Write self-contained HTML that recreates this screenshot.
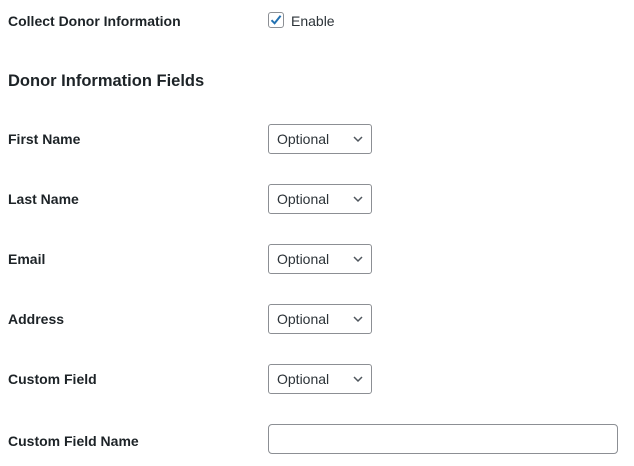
<!DOCTYPE html>
<html><head><style>
body{margin:0;background:#fff;font-family:"Liberation Sans",sans-serif;color:#1d2327;width:634px;height:466px;position:relative;overflow:hidden}
.l{position:absolute;left:8px;font-size:14px;font-weight:bold;line-height:16px}
.h{position:absolute;left:8px;top:71px;font-size:16.5px;font-weight:bold;line-height:20px}
.sel{position:absolute;left:268px;width:102px;height:28px;border:1px solid #8c8f94;border-radius:3px;box-sizing:content-box}
.sel span{position:absolute;left:8px;top:6px;font-size:14px;line-height:16px;color:#2c3338}
.sel svg{position:absolute;right:8px;top:10px}
.cb{position:absolute;left:268px;top:12px;width:14px;height:14px;border:1px solid #8c8f94;border-radius:3px}
</style></head><body>
<div class="l" style="top:13px">Collect Donor Information</div>
<div class="cb"><svg width="14" height="14" viewBox="0 0 14 14"><path d="M2.5 7.2 L5.6 10.3 L11.6 2.8" fill="none" stroke="#2271b1" stroke-width="2"/></svg></div>
<div style="position:absolute;left:291px;top:13px;font-size:14px;line-height:16px;color:#2c3338">Enable</div>
<div class="h">Donor Information Fields</div>
<div class="l" style="top:131px">First Name</div>
<div class="l" style="top:191px">Last Name</div>
<div class="l" style="top:251px">Email</div>
<div class="l" style="top:311px">Address</div>
<div class="l" style="top:371px">Custom Field</div>
<div class="l" style="top:433px">Custom Field Name</div>
<div class="sel" style="top:124px"><span>Optional</span><svg width="10" height="8" viewBox="0 0 10 8"><path d="M1 2 L5 6 L9 2" fill="none" stroke="#50575e" stroke-width="1.5"/></svg></div>
<div class="sel" style="top:184px"><span>Optional</span><svg width="10" height="8" viewBox="0 0 10 8"><path d="M1 2 L5 6 L9 2" fill="none" stroke="#50575e" stroke-width="1.5"/></svg></div>
<div class="sel" style="top:244px"><span>Optional</span><svg width="10" height="8" viewBox="0 0 10 8"><path d="M1 2 L5 6 L9 2" fill="none" stroke="#50575e" stroke-width="1.5"/></svg></div>
<div class="sel" style="top:304px"><span>Optional</span><svg width="10" height="8" viewBox="0 0 10 8"><path d="M1 2 L5 6 L9 2" fill="none" stroke="#50575e" stroke-width="1.5"/></svg></div>
<div class="sel" style="top:364px"><span>Optional</span><svg width="10" height="8" viewBox="0 0 10 8"><path d="M1 2 L5 6 L9 2" fill="none" stroke="#50575e" stroke-width="1.5"/></svg></div>
<div style="position:absolute;left:268px;top:424px;width:348px;height:28px;border:1px solid #8c8f94;border-radius:4px"></div>
</body></html>
